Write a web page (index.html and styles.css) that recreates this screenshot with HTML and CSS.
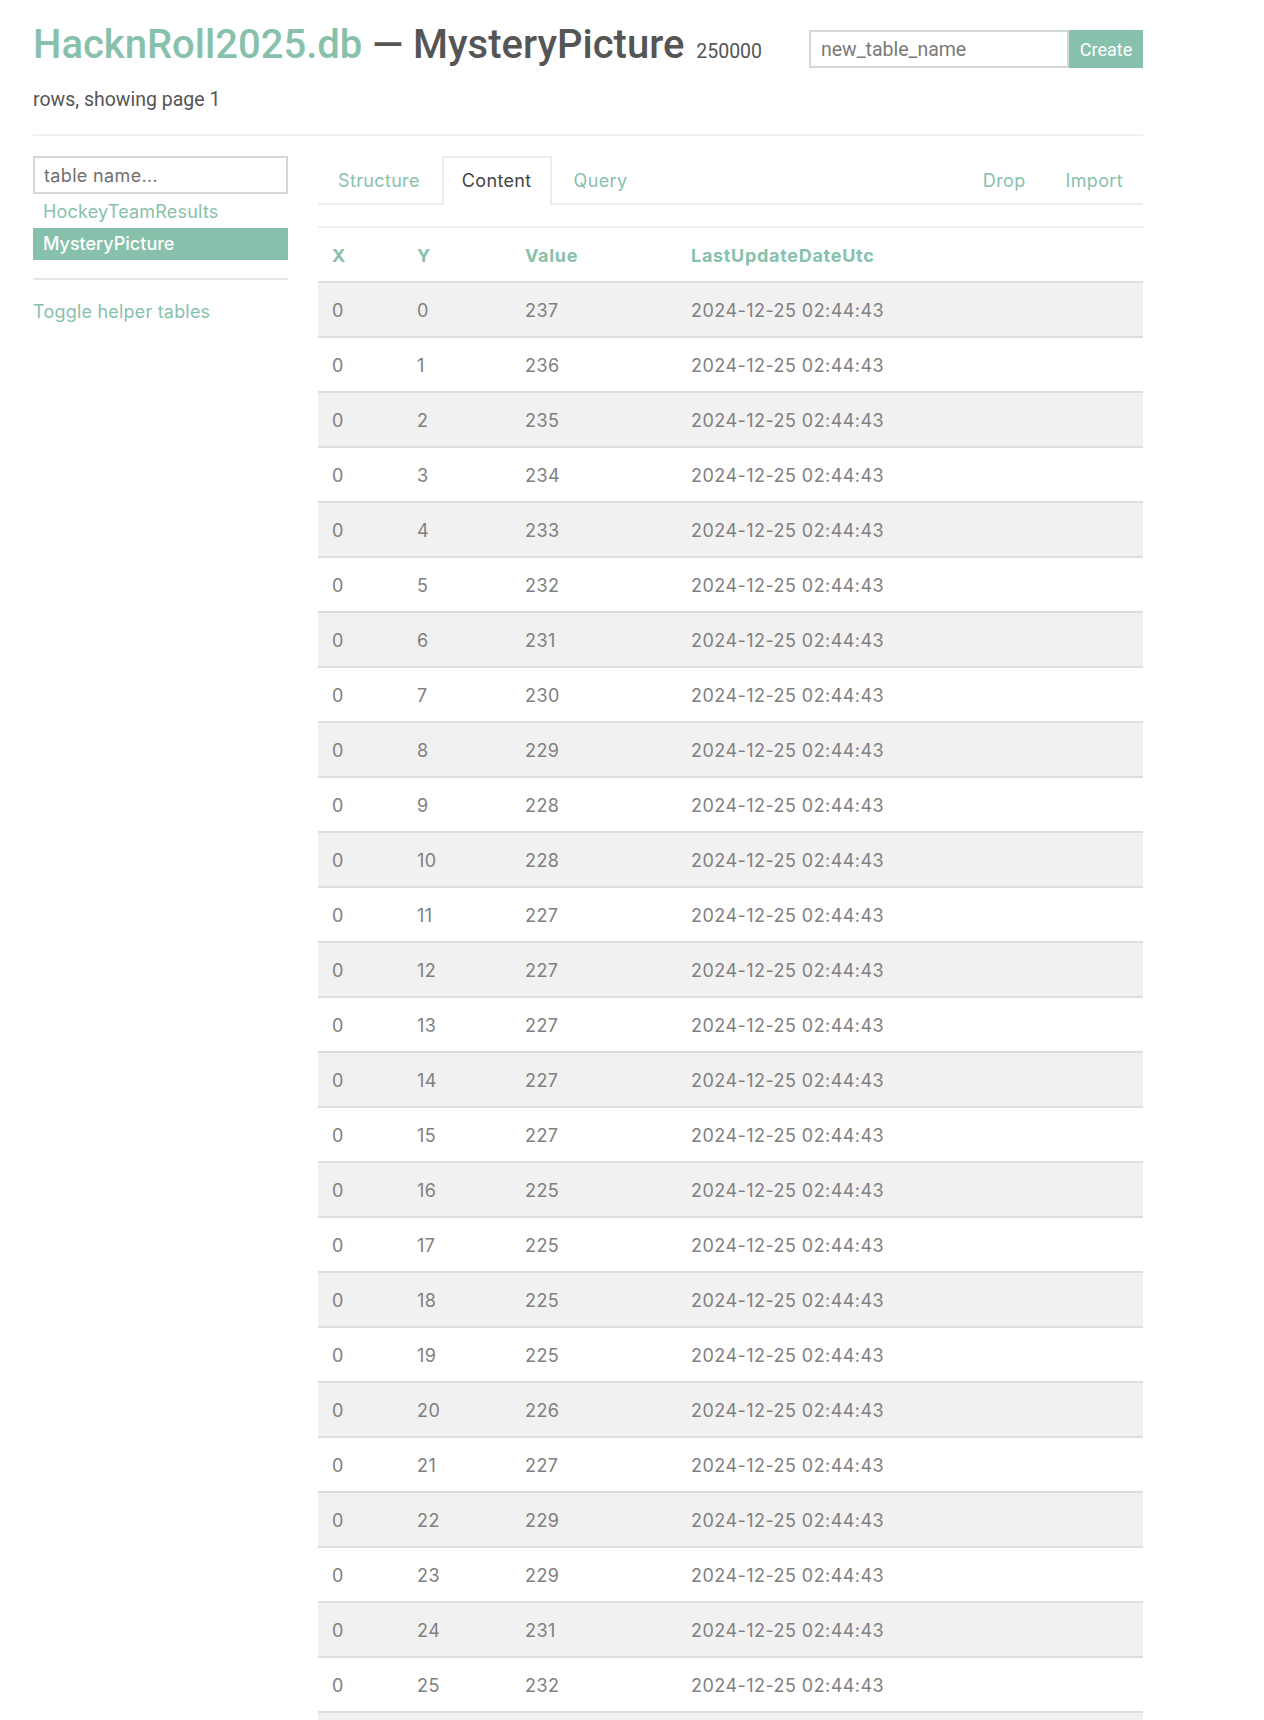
FILE: index.html
```html
<!DOCTYPE html>
<html lang="en">
<head>
<meta charset="utf-8">
<title>MysteryPicture — HacknRoll2025.db</title>
<link rel="stylesheet" href="styles.css">
</head>
<body>
<div class="container">
  <header class="page-header">
    <div class="title-block">
      <h1 class="title"><a class="db-name" href="#">HacknRoll2025.db</a> — MysteryPicture <small class="count">250000</small></h1>
      <p class="subline">rows, showing page 1</p>
    </div>
    <form class="create-form">
      <input class="create-input" type="text" placeholder="new_table_name">
      <button class="create-btn" type="button">Create</button>
    </form>
  </header>
  <div class="rule"></div>
  <div class="layout">
    <aside class="sidebar">
      <input class="filter" type="text" placeholder="table name...">
      <ul class="table-list">
        <li><a href="#">HockeyTeamResults</a></li>
        <li class="active"><a href="#">MysteryPicture</a></li>
      </ul>
      <hr class="side-rule">
      <a class="toggle" href="#">Toggle helper tables</a>
    </aside>
    <main class="main">
      <nav class="tabs">
        <a class="tab" href="#">Structure</a>
        <a class="tab active" href="#">Content</a>
        <a class="tab" href="#">Query</a>
        <span class="spacer"></span>
        <a class="tab tab-right" href="#">Drop</a>
        <a class="tab tab-right" href="#">Import</a>
      </nav>
      <table class="data">
        <thead>
          <tr><th class="c-x">X</th><th class="c-y">Y</th><th class="c-v">Value</th><th>LastUpdateDateUtc</th></tr>
        </thead>
        <tbody>
          <tr><td>0</td><td>0</td><td>237</td><td>2024-12-25 02:44:43</td></tr>
          <tr><td>0</td><td>1</td><td>236</td><td>2024-12-25 02:44:43</td></tr>
          <tr><td>0</td><td>2</td><td>235</td><td>2024-12-25 02:44:43</td></tr>
          <tr><td>0</td><td>3</td><td>234</td><td>2024-12-25 02:44:43</td></tr>
          <tr><td>0</td><td>4</td><td>233</td><td>2024-12-25 02:44:43</td></tr>
          <tr><td>0</td><td>5</td><td>232</td><td>2024-12-25 02:44:43</td></tr>
          <tr><td>0</td><td>6</td><td>231</td><td>2024-12-25 02:44:43</td></tr>
          <tr><td>0</td><td>7</td><td>230</td><td>2024-12-25 02:44:43</td></tr>
          <tr><td>0</td><td>8</td><td>229</td><td>2024-12-25 02:44:43</td></tr>
          <tr><td>0</td><td>9</td><td>228</td><td>2024-12-25 02:44:43</td></tr>
          <tr><td>0</td><td>10</td><td>228</td><td>2024-12-25 02:44:43</td></tr>
          <tr><td>0</td><td>11</td><td>227</td><td>2024-12-25 02:44:43</td></tr>
          <tr><td>0</td><td>12</td><td>227</td><td>2024-12-25 02:44:43</td></tr>
          <tr><td>0</td><td>13</td><td>227</td><td>2024-12-25 02:44:43</td></tr>
          <tr><td>0</td><td>14</td><td>227</td><td>2024-12-25 02:44:43</td></tr>
          <tr><td>0</td><td>15</td><td>227</td><td>2024-12-25 02:44:43</td></tr>
          <tr><td>0</td><td>16</td><td>225</td><td>2024-12-25 02:44:43</td></tr>
          <tr><td>0</td><td>17</td><td>225</td><td>2024-12-25 02:44:43</td></tr>
          <tr><td>0</td><td>18</td><td>225</td><td>2024-12-25 02:44:43</td></tr>
          <tr><td>0</td><td>19</td><td>225</td><td>2024-12-25 02:44:43</td></tr>
          <tr><td>0</td><td>20</td><td>226</td><td>2024-12-25 02:44:43</td></tr>
          <tr><td>0</td><td>21</td><td>227</td><td>2024-12-25 02:44:43</td></tr>
          <tr><td>0</td><td>22</td><td>229</td><td>2024-12-25 02:44:43</td></tr>
          <tr><td>0</td><td>23</td><td>229</td><td>2024-12-25 02:44:43</td></tr>
          <tr><td>0</td><td>24</td><td>231</td><td>2024-12-25 02:44:43</td></tr>
          <tr><td>0</td><td>25</td><td>232</td><td>2024-12-25 02:44:43</td></tr>
          <tr><td>0</td><td>26</td><td>233</td><td>2024-12-25 02:44:43</td></tr>
        </tbody>
      </table>
    </main>
  </div>
</div>
</body>
</html>
```
FILE: styles.css
```css
* { box-sizing: border-box; }
html, body { margin: 0; padding: 0; background: #fff; }
body {
  font-family: "Inter", "Noto Sans", sans-serif;
  font-size: 18px;
  line-height: 27px;
  letter-spacing: 0.35px;
  color: #555;
}
a { text-decoration: none; color: #88c1ab; }

.container { width: 1110px; margin-left: 33px; }

/* header */
.page-header { display: flex; justify-content: space-between; align-items: flex-start; letter-spacing: 0; }
.title-block { width: 740px; font-family: Roboto, "Liberation Sans", sans-serif; }
.title {
  margin: 21px 0 0;
  font-size: 40px;
  line-height: 48px;
  font-weight: 500;
  color: #555;
  white-space: nowrap;
}
.db-name { color: #88c1ab; }
.count { font-size: 19.5px; font-weight: 400; color: #555; margin-left: 2px; }
.subline { margin: 12px 0 0; font-size: 19.5px; line-height: 24px; color: #555; }

.create-form { display: flex; margin-top: 30px; }
.create-input {
  width: 260px; height: 38px;
  border: 2px solid #d3d8db;
  padding: 0 10px;
  font-family: Roboto, "Liberation Sans", sans-serif;
  font-size: 19.5px;
  color: #555;
  outline: none;
}
.create-input::placeholder { color: #7a7a7a; }
.create-btn {
  width: 74px; height: 38px;
  border: 0;
  background: #88c1ab;
  color: #fff;
  font-family: Roboto, "Liberation Sans", sans-serif;
  font-size: 18px;
  padding: 0;
}

.rule { height: 2px; background: #f4f1ed; margin-top: 22px; }

/* layout */
.layout { display: flex; gap: 30px; margin-top: 20px; }
.sidebar { width: 255px; flex: none; letter-spacing: 0.2px; }
.main { flex: 1; min-width: 0; }

.filter {
  display: block;
  width: 100%; height: 38px;
  border: 2px solid #d3d7da;
  padding: 0 9px;
  font-family: "Inter", "Noto Sans", sans-serif;
  font-size: 18px;
  letter-spacing: 0.35px;
  color: #555;
  outline: none;
}
.filter::placeholder { color: #707070; }
.table-list { list-style: none; margin: 2px 0 0; padding: 0; }
.table-list a { display: block; padding: 2px 10px; line-height: 28px; }
.table-list .active a { background: #88c1ab; color: #fff; font-weight: 500; letter-spacing: 0; }
.side-rule { border: 0; height: 2px; background: #e6e6e6; margin: 18px 0 0; }
.toggle { display: block; margin-top: 18px; }

/* tabs */
.tabs { display: flex; border-bottom: 2px solid #eeeeee; }
.spacer { flex: 1; }
.tab {
  padding: 9px 18px 11px;
  line-height: 27px;
  border: 2px solid transparent;
  border-bottom: 0;
  margin-right: 2px;
  margin-bottom: -2px;
}
.tab-right { padding-left: 17px; padding-right: 17px; }
.tab:last-child { margin-right: 0; padding-right: 18px; }
.tab.active { background: #fff; border-color: #ececec; color: #444; }

/* table */
.data {
  width: 100%;
  margin-top: 21px;
  border-collapse: separate;
  border-spacing: 0;
  table-layout: fixed;
}
.data th {
  text-align: left;
  color: #88c1ab;
  font-weight: 700;
  letter-spacing: 0.7px;
  padding: 14px 14px 12px;
  border-top: 2px solid #f0f0f0;
  border-bottom: 2px solid #dddddd;
}
.c-x { width: 85px; }
.c-y { width: 108px; }
.c-v { width: 166px; }
.data td {
  padding: 14px 14px 12px;
  color: #808080;
  letter-spacing: 0.45px;
  border-bottom: 2px solid #dedede;
}
.data tbody tr:nth-child(odd) td { background: #f1f1f1; }
```
